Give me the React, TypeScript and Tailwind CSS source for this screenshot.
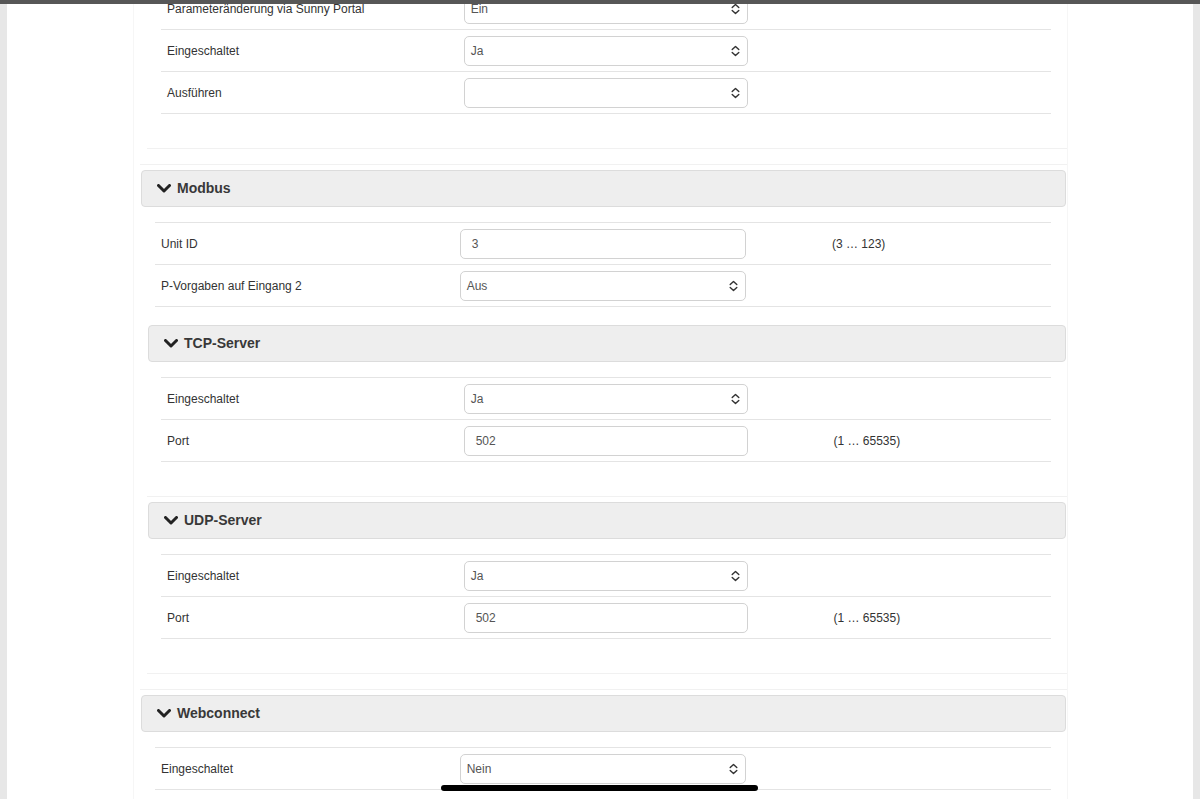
import React from "react"

type Field = { label: string; kind: "select" | "input"; value: string; hint?: string }
type SubPanel = { title?: string; fields: Field[] }
type Panel = { title?: string; fields: Field[]; children: SubPanel[] }

const panels: Panel[] = [
  {
    fields: [],
    children: [
      {
        fields: [
          { label: "Parameteränderung via Sunny Portal", kind: "select", value: "Ein" },
          { label: "Eingeschaltet", kind: "select", value: "Ja" },
          { label: "Ausführen", kind: "select", value: "" },
        ],
      },
    ],
  },
  {
    title: "Modbus",
    fields: [
      { label: "Unit ID", kind: "input", value: "3", hint: "(3 … 123)" },
      { label: "P-Vorgaben auf Eingang 2", kind: "select", value: "Aus" },
    ],
    children: [
      {
        title: "TCP-Server",
        fields: [
          { label: "Eingeschaltet", kind: "select", value: "Ja" },
          { label: "Port", kind: "input", value: "502", hint: "(1 … 65535)" },
        ],
      },
      {
        title: "UDP-Server",
        fields: [
          { label: "Eingeschaltet", kind: "select", value: "Ja" },
          { label: "Port", kind: "input", value: "502", hint: "(1 … 65535)" },
        ],
      },
    ],
  },
  {
    title: "Webconnect",
    fields: [{ label: "Eingeschaltet", kind: "select", value: "Nein" }],
    children: [],
  },
]

function Chevron() {
  return (
    <svg width="14" height="9" viewBox="0 0 14 9" className="flex-shrink-0">
      <path d="M1.5 1.5 L7 7 L12.5 1.5" fill="none" stroke="#222" strokeWidth="3" strokeLinecap="round" strokeLinejoin="round" />
    </svg>
  )
}

function UpDown() {
  return (
    <svg width="9" height="12" viewBox="0 0 9 12" className="flex-shrink-0">
      <path d="M1.2 4.6 L4.5 1.4 L7.8 4.6 M1.2 7.4 L4.5 10.6 L7.8 7.4" fill="none" stroke="#333" strokeWidth="1.4" strokeLinecap="round" strokeLinejoin="round" />
    </svg>
  )
}

function Heading({ title }: { title: string }) {
  return (
    <div className="mt-[5px] mx-px h-[37px] flex items-center gap-[6px] pl-[15px] bg-[#eeeeee] border border-[#dcdcdc] rounded-[4px]">
      <Chevron />
      <span className="text-[14px] font-bold text-[#383838]">{title}</span>
    </div>
  )
}

function Rows({ fields }: { fields: Field[] }) {
  return (
    <div className="border-b border-[#e4e4e4]">
      {fields.map((f, i) => (
        <div key={i} className="grid grid-cols-12 items-center h-[42px] border-t border-[#e4e4e4] text-[12px]">
          <div className="col-span-4 px-[6px] text-[#333] whitespace-nowrap">{f.label}</div>
          <div className="col-span-4 px-[6px]">
            {f.kind === "select" ? (
              <div className="h-[30px] flex items-center justify-between pl-[6px] pr-[7px] bg-white border border-[#d2d2d2] rounded-[5px] text-[#555]">
                <span>{f.value}</span>
                <UpDown />
              </div>
            ) : (
              <div className="h-[30px] flex items-center pl-[11px] bg-white border border-[#d2d2d2] rounded-[5px] text-[#555]">
                {f.value}
              </div>
            )}
          </div>
          {f.hint && <div className="col-span-3 col-start-10 pl-[5px] text-[#333]">{f.hint}</div>}
        </div>
      ))}
    </div>
  )
}

export default function App() {
  return (
    <div className="relative h-[799px] overflow-hidden bg-white flex" style={{ fontFamily: '"Liberation Sans", Arial, sans-serif' }}>
      <div className="w-[7px] bg-[#e7e7e7] flex-shrink-0" />

      <div className="flex-1">
        <div className="ml-[126px] w-[935px] -mt-[13px] border-l border-r border-[#f6f6f6]">
          {panels.map((p, i) => (
            <div key={i} className="ml-[6px] border-b border-[#f1f1f1] pb-[15px]">
              {p.title && <Heading title={p.title} />}
              {p.fields.length > 0 && (
                <div className="mt-[15px] pl-[15px] pr-[16px]">
                  <Rows fields={p.fields} />
                </div>
              )}
              {p.children.map((c, j) => (
                <div key={j} className={"ml-[7px] border-b border-[#f1f1f1] pb-[34px] " + (j === 0 && p.fields.length > 0 ? "mt-[18px]" : "")}>
                  {c.title && <Heading title={c.title} />}
                  <div className={"pl-[14px] pr-[16px] " + (c.title ? "mt-[15px]" : "")}>
                    <Rows fields={c.fields} />
                  </div>
                </div>
              ))}
            </div>
          ))}
        </div>
      </div>

      <div className="w-[7px] bg-[#e7e7e7] flex-shrink-0" />

      {/* status strip and home indicator sit over the page */}
      <div className="absolute top-0 left-0 right-0 h-[4px] bg-[#575757]" />
      <div className="absolute left-[441px] top-[785px] w-[317px] h-[6px] rounded-full bg-black" />
    </div>
  )
}
